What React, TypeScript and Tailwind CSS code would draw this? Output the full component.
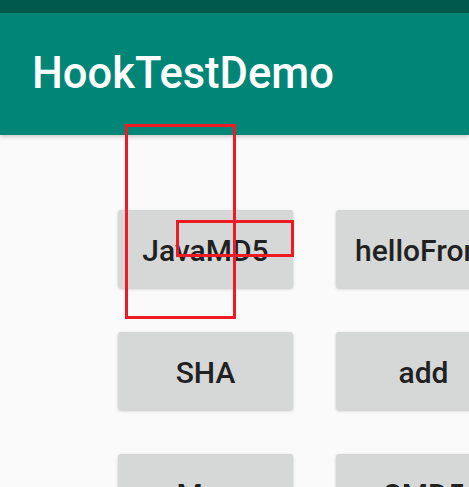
import React from 'react';

const buttons = ['JavaMD5', 'helloFromC', 'SHA', 'add', 'Mac', 'CMD5'];

export default function App() {
  return (
    <div
      className="relative w-[469px] h-[487px] overflow-hidden bg-[#fafafa]"
      style={{ fontFamily: 'Roboto, "Noto Sans", sans-serif' }}
    >
      {/* status bar */}
      <div className="h-[13px] bg-[#00574b]" />

      {/* app bar */}
      <div className="relative z-10 h-[122px] bg-[#008577] flex items-center pl-[32px] shadow-[0_2px_4px_rgba(0,0,0,0.18)]">
        <h1 className="text-[43.5px] font-medium text-white leading-none">
          HookTestDemo
        </h1>
      </div>

      {/* buttons */}
      <div className="pt-[75px] pl-[118px]">
        <div className="grid grid-cols-[175px_175px] gap-x-[43px] gap-y-[44px]">
          {buttons.map((label, i) => (
            <button
              key={label}
              className={
                'h-[78px] rounded-[3px] bg-[#d6d7d7] text-[30px] font-medium text-[#212121] whitespace-nowrap overflow-hidden shadow-[0_1px_3px_rgba(0,0,0,0.22)] flex items-center pt-[2px] ' +
                (i === 1 ? 'justify-start pl-[19px]' : 'justify-center')
              }
            >
              {label}
            </button>
          ))}
        </div>
      </div>

      {/* red annotation boxes */}
      <div className="absolute left-[125px] top-[124px] w-[111px] h-[195px] border-[3px] border-[#ed1c24] z-20" />
      <div className="absolute left-[176px] top-[220px] w-[118px] h-[37px] border-[3px] border-[#ed1c24] z-20" />
    </div>
  );
}
